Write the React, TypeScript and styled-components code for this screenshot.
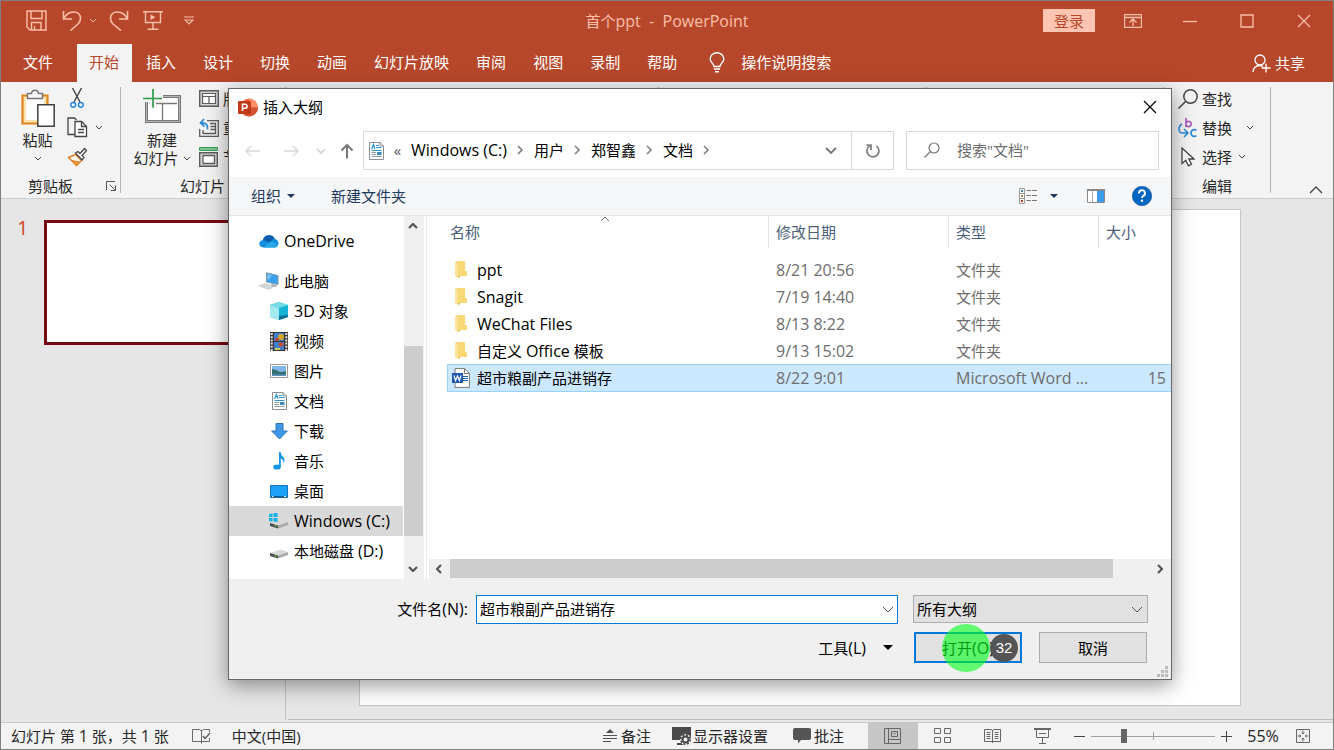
import React from "react";
import styled, { createGlobalStyle, css } from "styled-components";

const Global = createGlobalStyle`
  * { box-sizing: border-box; }
  html, body { margin: 0; padding: 0; }
  body, button, input, select {
    font-family: "Open Sans", "Noto Sans CJK SC", sans-serif;
    font-size: 15px;
    line-height: 20px;
  }
  button, input, select { margin: 0; padding: 0; border: 0; background: none; color: inherit; border-radius: 0; outline: 0; }
  button { display: inline-flex; align-items: center; justify-content: center; white-space: nowrap; }
  svg { display: block; flex: none; fill: none; }
`;

const Latin = styled.span`
  font-size: 16px;
`;

/* ---------- application window ---------- */

const Window = styled.div`
  position: relative;
  display: flex;
  flex-direction: column;
  min-height: 100vh;
  border: 1px solid #808080;
  background: #e6e6e6;
  color: #262626;
  overflow: hidden;
`;

const TitleBar = styled.header`
  display: grid;
  grid-template-columns: 1fr auto 1fr;
  align-items: center;
  height: 43px;
  padding-bottom: 4px;
  background: #b7472a;
  color: #fcc0aa;
`;

const QuickAccess = styled.div`
  display: flex;
  align-items: center;
  padding-left: 25px;
`;

const QuickButton = styled.button<{ $gap: number }>`
  margin-right: ${(p) => p.$gap}px;
`;

const DocTitle = styled.div`
  white-space: pre;
`;

const WindowControls = styled.div`
  display: flex;
  align-items: center;
  justify-content: flex-end;
  padding-right: 1px;
`;

const LoginButton = styled.button`
  width: 52px;
  height: 23px;
  margin-right: 9px;
  background: #fdc5b2;
  color: #b7472a;
`;

const ControlButton = styled.button`
  width: 57px;
  height: 38px;
`;

const TabBar = styled.nav`
  display: flex;
  gap: 2px;
  height: 38px;
  padding-left: 10px;
  background: #b7472a;
  color: #fff;
`;

const Tab = styled.button<{ $active?: boolean; $file?: boolean }>`
  padding: 0 13px 2px 12px;
  ${(p) => p.$file && css`margin-right: 9px;`}
  ${(p) => p.$active && css`background: #f3f3f3; color: #b7472a;`}
`;

const TellMe = styled.button`
  gap: 16px;
  margin-left: 17px;
  padding-bottom: 2px;
`;

const Share = styled.button`
  gap: 4px;
  margin: 0 28px 0 auto;
`;

const Ribbon = styled.section`
  display: flex;
  height: 117px;
  border-bottom: 1px solid #cdcdcd;
  background: #f3f3f3;
`;

const Group = styled.div<{ $width: number }>`
  display: flex;
  flex-direction: column;
  flex: none;
  width: ${(p) => p.$width}px;
  height: 106px;
  margin-top: 5px;
  border-right: 1px solid #b3b3b3;
`;

const GroupBody = styled.div<{ $left: number }>`
  display: flex;
  flex: none;
  height: 90px;
  padding-left: ${(p) => p.$left}px;
`;

const GroupLabel = styled.div<{ $left: number }>`
  display: flex;
  flex: none;
  align-items: center;
  justify-content: space-between;
  height: 18px;
  padding: 0 4px 0 ${(p) => p.$left}px;
`;

const BigButton = styled.button<{ $width: number }>`
  flex-direction: column;
  justify-content: flex-start;
  width: ${(p) => p.$width}px;
  line-height: 18px;
`;

const BigIcon = styled.span`
  display: flex;
  height: 44px;
  padding-top: 2px;
`;

const ChevronLine = styled.span`
  display: flex;
  align-items: center;
  gap: 4px;
  height: 18px;
`;

const SmallColumn = styled.div<{ $left?: number }>`
  display: flex;
  flex-direction: column;
  padding-left: ${(p) => p.$left ?? 0}px;
`;

const SmallButton = styled.button<{ $gap?: number }>`
  justify-content: flex-start;
  gap: 4px;
  height: 29px;
  padding-bottom: 6px;

  svg:last-child:not(:first-child) { margin-left: ${(p) => p.$gap ?? 2}px; }
`;

const IconSlot = styled.span`
  display: flex;
  justify-content: center;
  width: 20px;
`;

const CollapseButton = styled.button`
  align-self: flex-end;
  margin: 0 10px 4px auto;
`;

const Workspace = styled.main`
  display: flex;
  flex: 1;
  padding-bottom: 2px;
`;

const ThumbPane = styled.aside`
  display: flex;
  align-items: flex-start;
  gap: 16px;
  flex: none;
  width: 285px;
  padding: 21px 0 0 16px;
  border-right: 1px solid #c0c0c0;
`;

const SlideNumber = styled.span`
  width: 11px;
  color: #d24726;
  font-size: 20px;
  line-height: 16px;
`;

const Thumb = styled.div`
  width: 222px;
  height: 125px;
  border: 3px solid #760a14;
  background: #fff;
`;

const Canvas = styled.section`
  display: flex;
  flex: 1;
  margin-left: 2px;
  padding: 10px 92px 13px 71px;
  border-bottom: 1px solid #bdbdbd;
`;

const Slide = styled.div`
  flex: 1;
  border: 1px solid #c6c6c6;
  background: #fff;
`;

const StatusBar = styled.footer`
  display: flex;
  align-items: stretch;
  justify-content: space-between;
  height: 27px;
  border-top: 1px solid #c6c6c6;
  background: #f3f3f3;
`;

const StatusSide = styled.div`
  display: flex;
  align-items: center;
`;

const StatusText = styled.span`
  padding-left: 10px;
  white-space: nowrap;
`;

const StatusButton = styled.button<{ $before: number; $gap?: number }>`
  gap: ${(p) => p.$gap ?? 0}px;
  margin-left: ${(p) => p.$before}px;
`;

const Views = styled.div`
  display: flex;
  align-self: stretch;
  margin-left: 24px;
`;

const ViewButton = styled.button<{ $active?: boolean }>`
  width: 50px;
  padding-right: 2px;
  color: #666;
  background: ${(p) => (p.$active ? "#c6c6c6" : "transparent")};
`;

const ZoomRange = styled.input`
  appearance: none;
  width: 124px;
  height: 16px;
  margin: 0 6px;
  background:
    linear-gradient(#a0a0a0, #a0a0a0) center / 1px 8px no-repeat,
    linear-gradient(#a0a0a0, #a0a0a0) center / 100% 1px no-repeat;

  &::-webkit-slider-thumb {
    appearance: none;
    width: 6px;
    height: 14px;
    background: #666;
  }
`;

const ZoomValue = styled.button`
  width: 32px;
  margin: 0 17px 0 15px;
`;

const FitButton = styled.button`
  margin-right: 23px;
`;

/* ---------- file dialog ---------- */

const Dialog = styled.div`
  position: absolute;
  top: 87px;
  left: 227px;
  right: 161px;
  border: 1px solid #666;
  background: #fff;
  color: #000;
  box-shadow: 0 5px 20px rgba(0, 0, 0, 0.42);
`;

const DialogTitle = styled.div`
  display: flex;
  align-items: center;
  gap: 5px;
  height: 36px;
  padding: 0 14px 0 9px;

  button { margin-left: auto; }
`;

const AddressRow = styled.div`
  display: flex;
  height: 52px;
  padding: 6px 12px 7px 5px;
`;

const NavButton = styled.button<{ $width: number }>`
  width: ${(p) => p.$width}px;
`;

const AddressBox = styled.div`
  display: flex;
  align-items: center;
  flex: 1;
  margin-left: 1px;
  padding-left: 5px;
  border: 1px solid #d9d9d9;
`;

const Crumb = styled.button`
  padding-bottom: 2px;
`;

const Overflow = styled.span`
  width: 27px;
  padding-bottom: 2px;
  color: #555;
  text-align: center;
`;

const Separator = styled.span`
  display: flex;
  justify-content: center;
  width: 27px;
  padding-bottom: 2px;
`;

const DropButton = styled.button`
  width: 41px;
  margin-left: auto;
`;

const RefreshButton = styled.button`
  align-self: stretch;
  width: 42px;
  border-left: 1px solid #d9d9d9;
`;

const SearchBox = styled.label`
  display: flex;
  align-items: center;
  gap: 17px;
  width: 253px;
  margin-left: 12px;
  padding: 0 0 2px 17px;
  border: 1px solid #d9d9d9;

  input { flex: 1; min-width: 0; }
  input::placeholder { color: #6d6d6d; opacity: 1; }
`;

const Toolbar = styled.div`
  display: flex;
  align-items: center;
  height: 39px;
  padding: 0 19px 0 22px;
  border-bottom: 1px solid #e6e6e6;
  background: #f5f6f8;
  color: #1e395b;
`;

const ToolButton = styled.button<{ $after?: number; $push?: boolean }>`
  gap: 6px;
  margin-right: ${(p) => p.$after ?? 0}px;
  ${(p) => p.$push && css`margin-left: auto;`}
`;

const Browser = styled.div`
  display: flex;
  height: 363px;
`;

const Tree = styled.div`
  width: 175px;
  padding-top: 10px;
`;

const TreeItem = styled.button<{ $level: number; $selected?: boolean }>`
  justify-content: flex-start;
  gap: 5px;
  width: 174px;
  height: 30px;
  padding-left: ${(p) => (p.$level === 2 ? 40 : 30)}px;
  background: ${(p) => (p.$selected ? "#d9d9d9" : "transparent")};

  &:first-child { margin-bottom: 10px; }
`;

const ScrollArrow = styled.button`
  flex: none;
  width: 20px;
  height: 20px;
`;

const VScroll = styled.div`
  display: flex;
  flex-direction: column;
  width: 20px;
  margin-right: 2px;
  background: #f0f0f0;

  ${ScrollArrow} { width: 18px; }
`;

const HScroll = styled.div`
  display: flex;
  height: 20px;
  margin-left: 2px;
  padding-right: 1px;
  background: #f0f0f0;
`;

const ScrollRest = styled.span<{ $share: number }>`
  flex: ${(p) => p.$share};
`;

const ScrollThumb = styled.span<{ $share: number; $vertical?: boolean }>`
  flex: ${(p) => p.$share};
  background: #cdcdcd;
  ${(p) => (p.$vertical ? css`margin-right: 1px;` : css`margin: 0 0 1px 1px;`)}
`;

const FilePane = styled.div`
  display: flex;
  flex-direction: column;
  justify-content: space-between;
  flex: 1;
  min-width: 0;
  border-left: 1px solid #ececec;
`;

const FileArea = styled.div`
  padding-left: 20px;
`;

const FileTable = styled.table`
  width: 100%;
  border-collapse: separate;
  border-spacing: 0;
  table-layout: fixed;

  th, td {
    padding: 0 7px;
    text-align: left;
    font-weight: 400;
    white-space: nowrap;
    overflow: hidden;
  }
  td:last-child { padding-right: 5px; text-align: right; }
  tbody::before { content: ""; display: block; height: 8px; }
`;

const HeadCell = styled.th<{ $width?: number }>`
  position: relative;
  width: ${(p) => (p.$width ? `${p.$width}px` : "auto")};
  height: 32px;
  color: #4c607a;

  &:not(:last-child) { border-right: 1px solid #e5e5e5; }
  &:first-child { padding-left: 3px; }
`;

const SortMark = styled.span`
  position: absolute;
  top: 0;
  left: 153px;
`;

const FileRow = styled.tr<{ $selected?: boolean }>`
  height: 27px;
  color: #6d6d6d;

  td:first-child { padding-left: 3px; }

  ${(p) => p.$selected && css`
    td { height: 28px; background: #cce8ff; border: solid #99d1ff; border-width: 1px 0; }
    td:first-child { border-left-width: 1px; padding-left: 2px; }
  `}
`;

const FileName = styled.span`
  display: flex;
  align-items: center;
  gap: 6px;
  color: #000;
`;

const FileIcon = styled.span`
  display: flex;
  justify-content: center;
  width: 21px;
`;

const DialogFooter = styled.div`
  position: relative;
  display: flex;
  flex-direction: column;
  gap: 8px;
  padding: 16px 23px 16px 0;
  background: #f0f0f0;
`;

const FieldRow = styled.div`
  display: flex;
  align-items: flex-start;
`;

const FieldLabel = styled.label`
  width: 247px;
  padding-right: 8px;
  line-height: 28px;
  text-align: right;
`;

const ComboBox = styled.div`
  display: flex;
  flex: 1;
  height: 29px;
  margin-right: 15px;
  padding-left: 3px;
  border: 1px solid #0078d7;
  background: #fff;

  input { flex: 1; min-width: 0; padding-bottom: 2px; }
  button { width: 19px; }
`;

const SelectBox = styled.div`
  position: relative;
  width: 235px;

  select {
    appearance: none;
    width: 100%;
    height: 28px;
    padding-left: 3px;
    border: 1px solid #adadad;
    background: #e1e1e1;
  }
  svg { position: absolute; top: 11px; right: 5px; pointer-events: none; }
`;

const ActionRow = styled.div`
  display: flex;
  justify-content: flex-end;
  padding-right: 1px;
`;

const ToolsButton = styled.button`
  gap: 17px;
  margin-right: 21px;
`;

const PushButton = styled.button<{ $primary?: boolean }>`
  position: relative;
  width: 108px;
  height: 31px;
  border: ${(p) => (p.$primary ? "2px solid #0078d7" : "1px solid #adadad")};
  background: #e1e1e1;

  & + & { margin-left: 17px; }
`;

const ClickSpot = styled.span`
  position: absolute;
  top: -10px;
  left: 26px;
  width: 48px;
  height: 48px;
  border-radius: 50%;
  background: rgba(0, 255, 27, 0.6);
`;

const CountBadge = styled.span`
  position: absolute;
  top: 0;
  left: 74px;
  width: 28px;
  height: 28px;
  border-radius: 50%;
  background: #555;
  color: #fff;
  font: 15px/28px "Liberation Sans", sans-serif;
`;

const Grip = styled.svg`
  position: absolute;
  right: 3px;
  bottom: 2px;
`;

/* ---------- drawings ---------- */

const Chevron = ({ dir = "down", w = 8, color = "#444", sw = 1 }: { dir?: "down" | "up" | "right" | "left"; w?: number; color?: string; sw?: number }) => {
  const h = w / 2;
  const flat = dir === "down" || dir === "up";
  const d = {
    down: `M1 1 L${h + 1} ${h + 1} L${w + 1} 1`,
    up: `M1 ${h + 1} L${h + 1} 1 L${w + 1} ${h + 1}`,
    right: `M1 1 L${h + 1} ${h + 1} L1 ${w + 1}`,
    left: `M${h + 1} 1 L1 ${h + 1} L${h + 1} ${w + 1}`,
  }[dir];
  return (
    <svg width={flat ? w + 2 : h + 2} height={flat ? h + 2 : w + 2} stroke={color} strokeWidth={sw}>
      <path d={d} />
    </svg>
  );
};

const Triangle = ({ w = 8, color = "#1e395b" }: { w?: number; color?: string }) => (
  <svg width={w} height={w / 2}><path d={`M0 0H${w}L${w / 2} ${w / 2}Z`} fill={color} /></svg>
);

const SaveIcon = () => (
  <svg width="21" height="21" stroke="currentColor" strokeWidth="1.4">
    <path d="M1 1H20V20H4L1 17ZM5 1V8.5H16V1M5.5 20V12.5H15V20M8.5 16V20" />
  </svg>
);
const UndoIcon = () => (
  <svg width="20" height="21" stroke="currentColor" strokeWidth="1.6">
    <path d="M1.5 1V9H10M1.5 9C4 4 7.5 2 11.5 2C16 2 18.5 5 18.5 8.5C18.5 11 17.5 12.5 16 14L8.5 20.5" />
  </svg>
);
const RedoIcon = () => (
  <svg width="20" height="21" stroke="currentColor" strokeWidth="1.6">
    <path d="M18.5 1V9H10M18.5 9C16 4 12.5 2 8.5 2C4 2 1.5 5 1.5 8.5C1.5 11 2.5 12.5 4 14L12 20.5" />
  </svg>
);
const PresentIcon = () => (
  <svg width="20" height="21" stroke="currentColor" strokeWidth="1.4">
    <path d="M0 1.7H20M2.5 2V12.5H17.5V2M10 12.5V19M4.5 19.3H15.5" />
    <path d="M7.5 4.5V10L12.5 7.2Z" fill="currentColor" stroke="none" />
  </svg>
);
const CustomizeIcon = () => (
  <svg width="10" height="9" stroke="currentColor" strokeWidth="1.2"><path d="M0 1H10M1 4H9L5 8Z" /></svg>
);
const RibbonOptionsIcon = () => (
  <svg width="18" height="14" stroke="currentColor"><path d="M.5 .5H17.5V13.5H.5ZM.5 3.5H17.5M9 12V5.5M5.5 8.5L9 5L12.5 8.5" strokeWidth="1.3" /></svg>
);
const MinIcon = () => <svg width="14" height="14" stroke="currentColor" strokeWidth="1.3"><path d="M0 7.5H14" /></svg>;
const MaxIcon = () => <svg width="14" height="14" stroke="currentColor" strokeWidth="1.3"><path d="M1 1H13V13H1Z" /></svg>;
const CloseIcon = () => <svg width="14" height="14" stroke="currentColor" strokeWidth="1.2"><path d="M1 1L13 13M13 1L1 13" /></svg>;
const BulbIcon = () => (
  <svg width="16" height="21" stroke="currentColor" strokeWidth="1.4">
    <path d="M5 14.5C5 11.5 1.2 11 1.2 7A6.8 6.3 0 0 1 14.8 7C14.8 11 11 11.5 11 14.5ZM5 17H11M6 19.7H10" />
  </svg>
);
const ShareIcon = () => (
  <svg width="19" height="19" stroke="currentColor" strokeWidth="1.3">
    <circle cx="8" cy="6" r="5" /><path d="M1 18C1 14 4 11.5 7.5 11.5C9 11.5 10 11.8 11 12.5M14 9.5V18.5M9.5 14H18.5" />
  </svg>
);
const PasteIcon = () => (
  <svg width="36" height="39">
    <path d="M2.5 6.5H27.5V34.5H2.5Z" fill="#fbe3ae" stroke="#e28322" strokeWidth="2.2" />
    <path d="M6 9H24V31H6Z" fill="#fff" />
    <path d="M7.5 4.5H11.5C12 0 18 0 18.5 4.5H22.5V9.5H7.5Z" fill="#f8f8f8" stroke="#767676" strokeWidth="1.5" />
    <path d="M17.8 15.8H34.2V37.2H17.8Z" fill="#fff" stroke="#404040" strokeWidth="1.5" />
  </svg>
);
const CutIcon = () => (
  <svg width="14" height="21">
    <path d="M2.5 0L10 14M11.5 0L4 14" stroke="#444" strokeWidth="1.4" />
    <circle cx="3.2" cy="16.8" r="2.4" stroke="#2b88d8" strokeWidth="1.5" /><circle cx="10.8" cy="16.8" r="2.4" stroke="#2b88d8" strokeWidth="1.5" />
  </svg>
);
const CopyIcon = () => (
  <svg width="21" height="21" stroke="#444" strokeWidth="1.3">
    <path d="M8 17.5H1V1H7.5L9.5 3" /><path d="M8 4.5H14.5L19.5 9.5V19.5H8Z" fill="#fff" /><path d="M14.5 4.5V9.5H19.5M11 12.5H17M11 15.5H17" />
  </svg>
);
const BrushIcon = () => (
  <svg width="21" height="20">
    <path d="M1.5 10.5L8.5 7.5L14.5 13.5L9.5 18.5Z" fill="#fff8ee" stroke="#e07a1c" strokeWidth="1.4" />
    <path d="M4.5 13.5L12.5 15L9.5 18Z" fill="#f5a34a" stroke="#e07a1c" />
    <path d="M8.5 6L11 4.5L13 6.5L17.5 1.5L19.5 3.5L15 8.5L17 10.5L15 13Z" fill="#fff" stroke="#444" strokeWidth="1.3" />
  </svg>
);
const LauncherIcon = () => (
  <svg width="10" height="10" stroke="#555"><path d="M.5 9V.5H9M3.5 3.5L9 9M9.5 4.5V9.5H4.5" /></svg>
);
const NewSlideIcon = () => (
  <svg width="39" height="35">
    <path d="M3.5 7.5H36.5V32.5H3.5Z" fill="#fff" stroke="#777" strokeWidth="3" />
    <path d="M3.5 7.5H36.5V32.5H3.5Z" stroke="#b5b5b5" />
    <path d="M6.5 14.5H34M19.5 14.5V31" stroke="#777" strokeWidth="1.3" />
    <path d="M0 3H20V13H13V20H7V13H0Z" fill="#f3f3f3" />
    <path d="M10 0V18.5M0 9.5H19" stroke="#2d9c4a" strokeWidth="1.7" />
  </svg>
);
const LayoutIcon = () => (
  <svg width="20" height="17" stroke="#5c5c5c"><path d="M.7 .7H19.3V16.3H.7Z" fill="#d6d6d6" strokeWidth="1.4" /><path d="M3.5 3.5H16.5V13.5H3.5ZM3.5 6.5H16.5M10 6.5V13.5" fill="#fff" strokeWidth="1.2" /></svg>
);
const ResetIcon = () => (
  <svg width="20" height="19" stroke="#5c5c5c">
    <path d="M8 2.7H19.3V18.3H.7V11M11 5.5H16.5V15.5H4V12M11.5 8.5H16.5M11.5 11.5H16.5" strokeWidth="1.3" />
    <path d="M5 1L1.5 5L5.5 8.5M1.5 5C7 4 9 7 8.5 11.5" stroke="#2b88d8" strokeWidth="1.7" />
  </svg>
);
const SectionIcon = () => (
  <svg width="20" height="20" stroke="#5c5c5c"><path d="M.5 .5H18.5V3.5H.5Z" fill="#7fc494" stroke="#3a9d57" /><path d="M.7 5.7H18.3V19.3H.7Z" fill="#d6d6d6" strokeWidth="1.4" /><path d="M4 8.5H15.5V16.5H4Z" fill="#fff" strokeWidth="1.3" /></svg>
);
const FindIcon = () => (
  <svg width="20" height="20" stroke="#444" strokeWidth="1.5"><circle cx="12.5" cy="7.5" r="6.7" /><path d="M7.5 12.5L.5 19.5" /></svg>
);
const ReplaceIcon = () => (
  <svg width="20" height="21">
    <path d="M8 1V10M8 7A2.6 2.6 0 1 1 8 7.1" stroke="#a85cb8" strokeWidth="1.7" />
    <path d="M18.5 13.3C15.5 11.5 13 13.3 13 16C13 18.7 15.5 20.3 18.5 18.7" stroke="#2b88d8" strokeWidth="1.7" />
    <path d="M4 7C0 9 0 15.5 4 16H9.5M6 12L10 16L6 20" stroke="#2b88d8" strokeWidth="1.5" />
  </svg>
);
const PointerIcon = () => (
  <svg width="14" height="20" stroke="#444" strokeWidth="1.3"><path d="M1 1V16.5L4.8 13.3L7.5 18.8L10.5 17.3L7.8 12H13Z" fill="#fff" /></svg>
);
const SpellIcon = () => (
  <svg width="19" height="16" stroke="#6a6a6a"><path d="M9.5 2V15.5M9.5 13.5H.5V1.5H7.5L9.5 3L11.5 1.5H17.5V4M9.5 13.5H17.5V10" /><path d="M11 8L13 10.5L18 5" strokeWidth="1.7" /></svg>
);
const NotesIcon = () => (
  <svg width="14" height="14" stroke="#505050"><path d="M0 6.5H14M0 9.5H14M0 12.5H8" /><path d="M3 4L7 0L11 4Z" fill="#505050" stroke="none" /></svg>
);
const DisplayIcon = () => (
  <svg width="20" height="18">
    <path d="M0 0H19V13H0ZM5 16H11V18H5Z" fill="#4a4a4a" />
    <circle cx="13.5" cy="12.5" r="5.5" fill="#f3f3f3" />
    <circle cx="13.5" cy="12.5" r="3" stroke="#4a4a4a" strokeWidth="2" />
    <circle cx="13.5" cy="12.5" r="4.7" stroke="#4a4a4a" strokeWidth="1.8" strokeDasharray="1.9 1.8" />
  </svg>
);
const CommentIcon = () => (
  <svg width="18" height="16"><path d="M2 0H16Q18 0 18 2V10Q18 12 16 12H8L5 15.5V12H2Q0 12 0 10V2Q0 0 2 0Z" fill="#555" /></svg>
);
const NormalViewIcon = () => (
  <svg width="17" height="16" stroke="currentColor"><path d="M.5 .5H16.5V15.5H.5ZM4.5 .5V15.5M4.5 11.5H16.5M7.5 3.5H13.5V8.5H7.5ZM9.5 5.5H11.5" /></svg>
);
const SorterIcon = () => (
  <svg width="17" height="16" stroke="currentColor"><path d="M.5 .5H6.5V5.5H.5ZM10.5 .5H16.5V5.5H10.5ZM.5 9.5H6.5V14.5H.5ZM10.5 9.5H16.5V14.5H10.5Z" /></svg>
);
const ReadingIcon = () => (
  <svg width="17" height="16" stroke="currentColor"><path d="M8.5 2V15M8.5 13.5H.5V1.5H7L8.5 2.5L10 1.5H16.5V13.5H8.5M2.5 4.5H6.5M2.5 6.5H6.5M2.5 8.5H6.5M2.5 10.5H6.5M10.5 4.5H14.5M10.5 6.5H14.5M10.5 8.5H14.5M10.5 10.5H14.5" /></svg>
);
const ShowIcon = () => (
  <svg width="17" height="16" stroke="currentColor"><path d="M0 1H17" strokeWidth="2" /><path d="M2.5 1V9.5H14.5V1M5 5.5H12M8.5 9.5V15M5 15.5H12" /></svg>
);
const FitIcon = () => (
  <svg width="14" height="14" stroke="#666"><path d="M.5 .5H13.5V13.5H.5ZM7 1.5V5M5.5 3.5L7 5L8.5 3.5M7 12.5V9M5.5 10.5L7 9L8.5 10.5M1.5 7H5M3.5 5.5L5 7L3.5 8.5M12.5 7H9M10.5 5.5L9 7L10.5 8.5" /></svg>
);
const PptLogo = () => (
  <svg width="20" height="19">
    <circle cx="11" cy="9.5" r="9" fill="#ed6c47" />
    <path d="M11 .5A9 9 0 0 1 20 9.5H11Z" fill="#ff8f6b" />
    <path d="M2 9.5H20A9 9 0 0 1 2 9.5Z" fill="#d35230" />
    <rect y="3" width="13" height="13" rx="1" fill="#c13b1b" />
    <path d="M4.5 13V6.2H7A2 2 0 0 1 7 10.3H4.5" stroke="#fff" strokeWidth="1.6" />
  </svg>
);
const Arrow = ({ dir, color }: { dir: "left" | "right" | "up"; color: string }) => (
  <svg width="16" height="16" stroke={color} strokeWidth={dir === "up" ? 2 : 1.5}>
    <path d={dir === "left" ? "M15 8H1M6 3L1 8L6 13" : dir === "right" ? "M1 8H15M10 3L15 8L10 13" : "M8 15.5V2M2.5 7.5L8 2L13.5 7.5"} />
  </svg>
);
const DocIcon = () => (
  <svg width="15" height="18">
    <path d="M.5 .5H11L14.5 4V17.5H.5Z" fill="#fff" stroke="#8a8f93" />
    <path d="M11 .5V4H14.5" stroke="#8a8f93" />
    <path d="M2.5 7L4.5 2.5L6 7M7 3.5H10M7 5.5H12.5M2.5 8.5H12.5" stroke="#2b95d6" strokeWidth="1.2" />
    <path d="M2.5 10.5H7M2.5 12.5H7M2.5 14.5H12.5" stroke="#8d9aa3" /><path d="M8 10H12.5V13H8Z" fill="#3a88b8" />
  </svg>
);
const RefreshIcon = () => (
  <svg width="16" height="16" stroke="#808080" strokeWidth="1.8"><path d="M11.5 3A6 6 0 1 1 4.5 2.9M1.5 2.2H6V7" /></svg>
);
const SearchIcon = () => (
  <svg width="16" height="16" stroke="#777" strokeWidth="1.2"><circle cx="10" cy="6" r="5" /><path d="M6.5 9.5L.5 15.5" /></svg>
);
const ListIcon = () => (
  <svg width="18" height="16">
    <path d="M.5 .5H5.5V15.5H.5ZM.5 5.5H5.5M.5 10.5H5.5" fill="#fff" stroke="#9a9a9a" />
    <path d="M2 2H4V4H2Z" fill="#3f7fb5" /><path d="M2 7H4V9H2Z" fill="#b08a3c" /><path d="M2 12H4V14H2Z" fill="#c23b22" />
    <path d="M7.5 2.5H12M13 2.5H18M7.5 7.5H12M13 7.5H18M7.5 12.5H12M13 12.5H18" stroke="#777" />
  </svg>
);
const PreviewIcon = () => (
  <svg width="18" height="14">
    <path d="M.5 .5H17.5V13.5H.5Z" fill="#fff" stroke="#888" /><path d="M0 0H18V2H0Z" fill="#888" />
    <path d="M5.5 2V13" stroke="#aaa" /><path d="M10 2H17V13H10Z" fill="#3d9ae8" />
  </svg>
);
const HelpIcon = () => (
  <svg width="20" height="20"><circle cx="10" cy="10" r="9.7" fill="#0067c0" stroke="#0b4f94" strokeWidth=".6" /><path d="M7 7.5A3 3 0 1 1 11 10Q10 10.7 10 12" stroke="#fff" strokeWidth="1.9" /><circle cx="10" cy="14.8" r="1.2" fill="#fff" /></svg>
);
const OneDriveIcon = () => (
  <svg width="20" height="14">
    <path d="M4 6A6.2 6.2 0 0 1 15.5 4.5Q19.5 6 19.5 9.5Q19 13 16 13.5H4.5Q.3 13 .2 9.5Q.5 6.5 4 6Z" fill="#1490df" />
    <path d="M4 6A6.2 6.2 0 0 1 15.5 4.5L10 8.5Z" fill="#0a5cad" />
    <path d="M4.5 13.5L12 7.5Q16.5 9 19 11.5Q18 13.5 16 13.5Z" fill="#28a8ea" />
  </svg>
);
const PcIcon = () => (
  <svg width="20" height="18">
    <path d="M7.5 .8L19 3.5V12.5L7.5 10Z" fill="#39a0ee" stroke="#7c98ab" />
    <path d="M8.5 2L13 3L8.5 9Z" fill="#7cc4f7" />
    <path d="M12 12L17 13L18 15L13 14Z" fill="#9aa2a8" />
    <path d="M0 14L6 11.5L15 14.5L10 17.5Z" fill="#d5d8da" stroke="#b4b8ba" strokeWidth=".5" />
  </svg>
);
const CubeIcon = () => (
  <svg width="18" height="18"><path d="M0 3L9 0L18 3V15L9 18L0 15Z" fill="#14b4d4" /><path d="M0 3L9 0L18 3L9 6Z" fill="#74dce6" /><path d="M0 3L9 6V18L0 15Z" fill="#a4e9ef" /><path d="M9 14L18 13V15L9 18Z" fill="#0b6e94" /></svg>
);
const VideoIcon = () => (
  <svg width="18" height="19">
    <path d="M0 0H18V19H0Z" fill="#3b3533" /><path d="M4 1H14V9H4ZM4 10H14V18H4Z" fill="#3f7fd0" />
    <path d="M1.7 1V19M16.3 1V19" stroke="#e4e4e4" strokeWidth="2" strokeDasharray="2 1.2" />
    <circle cx="11" cy="5" r="3" fill="#d9a521" /><circle cx="7" cy="7.5" r="1.8" fill="#d0402c" /><circle cx="11" cy="12.5" r="2.3" fill="#c94b30" /><path d="M5 16H10V18H5Z" fill="#c9cf5a" />
  </svg>
);
const PictureIcon = () => (
  <svg width="18" height="14"><path d="M.5 .5H17.5V13.5H.5Z" fill="#fff" stroke="#999" /><path d="M2 2H16V8H2Z" fill="#7fb9e8" /><path d="M2 5Q7 6 10 8Q14 8 16 7V12H2Z" fill="#35706c" /><path d="M2 10.5H16V12H2Z" fill="#5d93c4" /></svg>
);
const DownloadIcon = () => (
  <svg width="17" height="17"><path d="M5 .5H12V8H16.3L8.5 16L.7 8H5Z" fill="#3f97e6" stroke="#2a74bd" /></svg>
);
const MusicIcon = () => (
  <svg width="12" height="18"><ellipse cx="4" cy="15" rx="3.8" ry="2.6" fill="#1597e8" /><path d="M6 0H7.5Q8 3.5 10.5 5.5Q12.5 8 10.5 11.5Q10.8 7.5 7.8 6.5V15H6Z" fill="#1597e8" /></svg>
);
const DesktopIcon = () => (
  <svg width="18" height="13"><path d="M.5 .5H17.5V12.5H.5Z" fill="#1da1f7" stroke="#1577b8" /><path d="M1 11H17V12.5H1Z" fill="#125a91" /><path d="M2 11.5H3.5M14 11.5H16" stroke="#fff" /></svg>
);
const DriveIcon = ({ win }: { win?: boolean }) => (
  <svg width="20" height="16">
    <path d="M1 10L11 6.5L19 9L9 12.5Z" fill="#d9d9d9" /><path d="M9 12.5L19 9V12L9 15.5Z" fill="#a9a9a9" /><path d="M1 10L9 12.5V15.5L1 13Z" fill="#4d4d4d" /><path d="M5.5 12.7L7.5 13.3" stroke="#59c03c" strokeWidth="1.3" />
    {win && <path d="M0 1L3.5 .5V4H0ZM4.5 .3L8.5 0V4H4.5ZM0 5H3.5V8.5L0 8ZM4.5 5H8.5V9L4.5 8.6Z" fill="#12b1e6" />}
  </svg>
);
const FolderIcon = () => (
  <svg width="13" height="17"><path d="M1 1L6 0V17L1 15Z" fill="#e9bd57" /><path d="M4 0H11V10H13V15H6L4 15Z" fill="#f8d775" /><path d="M1 1L4 2V17L1 15Z" fill="#fde39a" /></svg>
);
const WordIcon = () => (
  <svg width="18" height="20">
    <path d="M3 .6H12.5L17.4 5.5V19.4H3Z" fill="#fff" stroke="#777" /><path d="M12.5 .6V5.5H17.4" stroke="#777" />
    <path d="M11 8.5H16M11 10.5H16M11 12.5H16" stroke="#2b65b8" /><rect y="5" width="11" height="10" fill="#1f59b0" />
    <path d="M2 7.5L3.6 12.5L5.5 8L7.4 12.5L9 7.5" stroke="#fff" strokeWidth="1.2" />
  </svg>
);

/* ---------- data ---------- */

const tabs = ["插入", "设计", "切换", "动画", "幻灯片放映", "审阅", "视图", "录制", "帮助"];

const tree: { label: React.ReactNode; icon: React.ReactNode; level: number; selected?: boolean }[] = [
  { label: <Latin>OneDrive</Latin>, icon: <OneDriveIcon />, level: 1 },
  { label: "此电脑", icon: <PcIcon />, level: 1 },
  { label: <><Latin>3D</Latin> 对象</>, icon: <CubeIcon />, level: 2 },
  { label: "视频", icon: <VideoIcon />, level: 2 },
  { label: "图片", icon: <PictureIcon />, level: 2 },
  { label: "文档", icon: <DocIcon />, level: 2 },
  { label: "下载", icon: <DownloadIcon />, level: 2 },
  { label: "音乐", icon: <MusicIcon />, level: 2 },
  { label: "桌面", icon: <DesktopIcon />, level: 2 },
  { label: <Latin>Windows (C:)</Latin>, icon: <DriveIcon win />, level: 2, selected: true },
  { label: <>本地磁盘 <Latin>(D:)</Latin></>, icon: <DriveIcon />, level: 2 },
];

const files: { name: React.ReactNode; date: string; type: React.ReactNode; size?: string; word?: boolean }[] = [
  { name: <Latin>ppt</Latin>, date: "8/21 20:56", type: "文件夹" },
  { name: <Latin>Snagit</Latin>, date: "7/19 14:40", type: "文件夹" },
  { name: <Latin>WeChat Files</Latin>, date: "8/13 8:22", type: "文件夹" },
  { name: <span>自定义 <Latin>Office</Latin> 模板</span>, date: "9/13 15:02", type: "文件夹" },
  { name: "超市粮副产品进销存", date: "8/22 9:01", type: <Latin>Microsoft Word ...</Latin>, size: "15", word: true },
];

const crumbs = ["Windows (C:)", "用户", "郑智鑫", "文档"];

/* ---------- page ---------- */

const RibbonArea = () => (
  <Ribbon>
    <Group $width={120}>
      <GroupBody $left={17}>
        <BigButton $width={39}>
          <BigIcon><PasteIcon /></BigIcon>
          粘贴
          <ChevronLine><Chevron w={6} /></ChevronLine>
        </BigButton>
        <SmallColumn $left={10}>
          <SmallButton aria-label="剪切"><IconSlot><CutIcon /></IconSlot></SmallButton>
          <SmallButton aria-label="复制" $gap={4}><IconSlot><CopyIcon /></IconSlot><Chevron w={6} /></SmallButton>
          <SmallButton aria-label="格式刷"><IconSlot><BrushIcon /></IconSlot></SmallButton>
        </SmallColumn>
      </GroupBody>
      <GroupLabel $left={27}>剪贴板<LauncherIcon /></GroupLabel>
    </Group>
    <Group $width={165}>
      <GroupBody $left={8}>
        <BigButton $width={66}>
          <BigIcon><NewSlideIcon /></BigIcon>
          新建
          <ChevronLine>幻灯片 <Chevron w={6} /></ChevronLine>
        </BigButton>
        <SmallColumn $left={4}>
          <SmallButton><IconSlot><LayoutIcon /></IconSlot>版式</SmallButton>
          <SmallButton><IconSlot><ResetIcon /></IconSlot>重置</SmallButton>
          <SmallButton><IconSlot><SectionIcon /></IconSlot>节</SmallButton>
        </SmallColumn>
      </GroupBody>
      <GroupLabel $left={59}>幻灯片</GroupLabel>
    </Group>
    <Group $width={373} />
    <Group $width={268} />
    <Group $width={237} />
    <Group $width={107}>
      <GroupBody $left={14}>
        <SmallColumn>
          <SmallButton><IconSlot><FindIcon /></IconSlot>查找</SmallButton>
          <SmallButton $gap={10}><IconSlot><ReplaceIcon /></IconSlot>替换<Chevron w={6} /></SmallButton>
          <SmallButton><IconSlot><PointerIcon /></IconSlot>选择<Chevron w={6} /></SmallButton>
        </SmallColumn>
      </GroupBody>
      <GroupLabel $left={38}>编辑</GroupLabel>
    </Group>
    <CollapseButton aria-label="折叠功能区"><Chevron dir="up" w={12} sw={1.3} /></CollapseButton>
  </Ribbon>
);

const OpenDialog = () => (
  <Dialog role="dialog" aria-label="插入大纲">
    <DialogTitle>
      <PptLogo />
      插入大纲
      <button aria-label="关闭"><CloseIcon /></button>
    </DialogTitle>
    <AddressRow>
      <NavButton $width={38} aria-label="后退"><Arrow dir="left" color="#d8d8d8" /></NavButton>
      <NavButton $width={38} aria-label="前进"><Arrow dir="right" color="#d8d8d8" /></NavButton>
      <NavButton $width={22} aria-label="最近的位置"><Chevron color="#cfcfcf" sw={1.6} /></NavButton>
      <NavButton $width={30} aria-label="向上"><Arrow dir="up" color="#777" /></NavButton>
      <AddressBox>
        <DocIcon />
        <Overflow>«</Overflow>
        {crumbs.map((c, i) => (
          <React.Fragment key={c}>
            <Crumb>{i === 0 ? <Latin>{c}</Latin> : c}</Crumb>
            <Separator><Chevron dir="right" color="#777" sw={1.5} /></Separator>
          </React.Fragment>
        ))}
        <DropButton aria-label="以前的位置"><Chevron w={10} color="#777" sw={1.8} /></DropButton>
        <RefreshButton aria-label="刷新"><RefreshIcon /></RefreshButton>
      </AddressBox>
      <SearchBox>
        <SearchIcon />
        <input aria-label="搜索" placeholder={'搜索"文档"'} />
      </SearchBox>
    </AddressRow>
    <Toolbar>
      <ToolButton $after={36}>组织<Triangle /></ToolButton>
      <ToolButton>新建文件夹</ToolButton>
      <ToolButton $push $after={13} aria-label="视图"><ListIcon /></ToolButton>
      <ToolButton $after={29} aria-label="更多选项"><Triangle /></ToolButton>
      <ToolButton $after={27} aria-label="预览窗格"><PreviewIcon /></ToolButton>
      <ToolButton aria-label="帮助"><HelpIcon /></ToolButton>
    </Toolbar>
    <Browser>
      <Tree>
        {tree.map((t, i) => (
          <TreeItem key={i} $level={t.level} $selected={t.selected}>
            <IconSlot>{t.icon}</IconSlot>
            <span>{t.label}</span>
          </TreeItem>
        ))}
      </Tree>
      <VScroll>
        <ScrollArrow aria-label="向上滚动"><Chevron dir="up" color="#555" sw={2.2} /></ScrollArrow>
        <ScrollRest $share={110} />
        <ScrollThumb $share={190} $vertical />
        <ScrollRest $share={23} />
        <ScrollArrow aria-label="向下滚动"><Chevron color="#555" sw={2.2} /></ScrollArrow>
      </VScroll>
      <FilePane>
        <FileArea>
          <FileTable>
            <thead>
              <tr>
                <HeadCell $width={322}>名称<SortMark><Chevron dir="up" color="#777" /></SortMark></HeadCell>
                <HeadCell $width={180}>修改日期</HeadCell>
                <HeadCell $width={150}>类型</HeadCell>
                <HeadCell>大小</HeadCell>
              </tr>
            </thead>
            <tbody>
              {files.map((f) => (
                <FileRow key={f.date} $selected={f.word}>
                  <td><FileName><FileIcon>{f.word ? <WordIcon /> : <FolderIcon />}</FileIcon>{f.name}</FileName></td>
                  <td><Latin>{f.date}</Latin></td>
                  <td>{f.type}</td>
                  <td><Latin>{f.size}</Latin></td>
                </FileRow>
              ))}
            </tbody>
          </FileTable>
        </FileArea>
        <HScroll>
          <ScrollArrow aria-label="向左滚动"><Chevron dir="left" color="#555" sw={2.2} /></ScrollArrow>
          <ScrollThumb $share={663} />
          <ScrollRest $share={37} />
          <ScrollArrow aria-label="向右滚动"><Chevron dir="right" color="#555" sw={2.2} /></ScrollArrow>
        </HScroll>
      </FilePane>
    </Browser>
    <DialogFooter>
      <FieldRow>
        <FieldLabel htmlFor="file-name">文件名<Latin>(N):</Latin></FieldLabel>
        <ComboBox>
          <input id="file-name" defaultValue="超市粮副产品进销存" />
          <button aria-label="历史记录"><Chevron w={10} color="#555" /></button>
        </ComboBox>
        <SelectBox>
          <select aria-label="文件类型"><option>所有大纲</option></select>
          <Chevron w={10} color="#555" />
        </SelectBox>
      </FieldRow>
      <ActionRow>
        <ToolsButton><span>工具<Latin>(L)</Latin></span><Triangle w={10} color="#000" /></ToolsButton>
        <PushButton $primary>
          <span>打开<Latin>(O)</Latin></span>
          <ClickSpot />
          <CountBadge>32</CountBadge>
        </PushButton>
        <PushButton>取消</PushButton>
      </ActionRow>
      <Grip width="11" height="11">
        <path d="M8 0H11V3H8ZM4 4H7V7H4ZM8 4H11V7H8ZM0 8H3V11H0ZM4 8H7V11H4ZM8 8H11V11H8Z" fill="#bdbdbd" />
      </Grip>
    </DialogFooter>
  </Dialog>
);

export default function App() {
  return (
    <>
      <Global />
      <Window>
        <TitleBar>
          <QuickAccess>
            <QuickButton $gap={15} aria-label="保存"><SaveIcon /></QuickButton>
            <QuickButton $gap={7} aria-label="撤消"><UndoIcon /></QuickButton>
            <QuickButton $gap={12} aria-label="撤消选项"><Chevron w={6} color="#fcc0aa" /></QuickButton>
            <QuickButton $gap={14} aria-label="恢复"><RedoIcon /></QuickButton>
            <QuickButton $gap={21} aria-label="从头开始"><PresentIcon /></QuickButton>
            <QuickButton $gap={0} aria-label="自定义快速访问工具栏"><CustomizeIcon /></QuickButton>
          </QuickAccess>
          <DocTitle>首个<Latin>{"ppt  -  PowerPoint"}</Latin></DocTitle>
          <WindowControls>
            <LoginButton>登录</LoginButton>
            <ControlButton aria-label="功能区显示选项"><RibbonOptionsIcon /></ControlButton>
            <ControlButton aria-label="最小化"><MinIcon /></ControlButton>
            <ControlButton aria-label="最大化"><MaxIcon /></ControlButton>
            <ControlButton aria-label="关闭"><CloseIcon /></ControlButton>
          </WindowControls>
        </TitleBar>
        <TabBar>
          <Tab $file>文件</Tab>
          <Tab $active>开始</Tab>
          {tabs.map((t) => <Tab key={t}>{t}</Tab>)}
          <TellMe><BulbIcon />操作说明搜索</TellMe>
          <Share><ShareIcon />共享</Share>
        </TabBar>
        <RibbonArea />
        <Workspace>
          <ThumbPane><SlideNumber>1</SlideNumber><Thumb /></ThumbPane>
          <Canvas><Slide /></Canvas>
        </Workspace>
        <StatusBar>
          <StatusSide>
            <StatusText>幻灯片 第 <Latin>1</Latin> 张，共 <Latin>1</Latin> 张</StatusText>
            <StatusButton $before={23} aria-label="拼写检查"><SpellIcon /></StatusButton>
            <StatusButton $before={21}>中文(中国)</StatusButton>
          </StatusSide>
          <StatusSide>
            <StatusButton $before={0} $gap={4}><NotesIcon />备注</StatusButton>
            <StatusButton $before={21} $gap={1}><DisplayIcon />显示器设置</StatusButton>
            <StatusButton $before={25} $gap={3}><CommentIcon />批注</StatusButton>
            <Views>
              <ViewButton $active aria-label="普通视图"><NormalViewIcon /></ViewButton>
              <ViewButton aria-label="幻灯片浏览"><SorterIcon /></ViewButton>
              <ViewButton aria-label="阅读视图"><ReadingIcon /></ViewButton>
              <ViewButton aria-label="幻灯片放映"><ShowIcon /></ViewButton>
            </Views>
            <StatusButton $before={6} aria-label="缩小"><svg width="11" height="11" stroke="#444"><path d="M0 5.5H11" /></svg></StatusButton>
            <ZoomRange type="range" min={0} max={100} defaultValue={25} aria-label="显示比例" />
            <StatusButton $before={0} aria-label="放大"><svg width="11" height="11" stroke="#444"><path d="M0 5.5H11M5.5 0V11" /></svg></StatusButton>
            <ZoomValue><Latin>55%</Latin></ZoomValue>
            <FitButton aria-label="适应窗口"><FitIcon /></FitButton>
          </StatusSide>
        </StatusBar>
        <OpenDialog />
      </Window>
    </>
  );
}
